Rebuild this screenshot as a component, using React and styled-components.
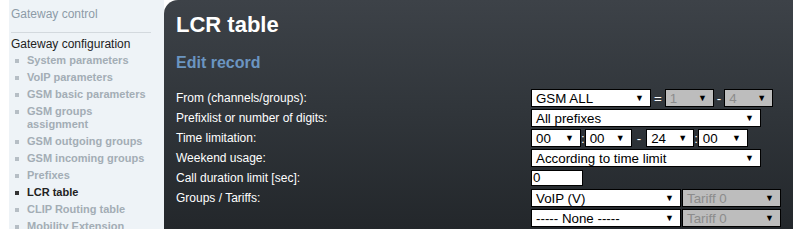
import React from "react";
import styled, { createGlobalStyle } from "styled-components";

const GlobalStyle = createGlobalStyle`
  html, body {
    margin: 0;
    padding: 0;
    background: #ffffff;
  }
  body {
    font-family: "Liberation Sans", Arial, sans-serif;
  }
`;

const Page = styled.div`
  display: flex;
  height: 229px;
  overflow: hidden;
  padding: 0 21px 0 9px;
  background: #ffffff;
`;

const Sidebar = styled.nav`
  width: 155px;
  flex-shrink: 0;
  box-sizing: border-box;
  padding: 6px 13px 0 2px;
  background: #eef3f7;
`;

const TopLink = styled.div`
  font-size: 12px;
  line-height: 16px;
  color: #8d9ba7;
`;

const Divider = styled.hr`
  margin: 10px 0 0;
  border: 0;
  border-top: 1px solid #d3d9de;
`;

const SectionTitle = styled.div`
  margin-top: 3px;
  font-size: 12px;
  line-height: 16px;
  color: #222222;
`;

const MenuList = styled.ul`
  list-style: none;
  margin: 0;
  padding: 0 0 0 16px;
`;

const MenuItem = styled.li`
  position: relative;
  padding: 2px 0;
  font-size: 11px;
  font-weight: bold;
  line-height: 13px;
  color: ${(p) => (p.$active ? "#222222" : "#a3adb5")};

  &::before {
    content: "";
    position: absolute;
    left: -12px;
    top: 7px;
    width: 4px;
    height: 4px;
    background: ${(p) => (p.$active ? "#333333" : "#b6bec5")};
  }
`;

const Main = styled.main`
  flex: 1;
  box-sizing: border-box;
  padding: 12px 12px 0;
  border-top-left-radius: 14px;
  background: linear-gradient(180deg, #3d4248 0%, #30353a 50%, #23272b 100%);
`;

const Title = styled.h1`
  margin: 0;
  font-size: 22px;
  line-height: 26px;
  font-weight: bold;
  color: #ffffff;
`;

const Subtitle = styled.h2`
  margin: 15px 0 0;
  font-size: 16px;
  line-height: 20px;
  font-weight: bold;
  color: #6b95c1;
`;

const Form = styled.div`
  margin-top: 15px;
  display: grid;
  grid-template-columns: 355px 1fr;
  grid-auto-rows: 20px;
  align-items: center;
`;

const Label = styled.div`
  font-size: 12px;
  color: #ffffff;
`;

const Controls = styled.div`
  display: flex;
  align-items: center;
`;

const SelectBox = styled.div`
  display: inline-flex;
  align-items: center;
  justify-content: space-between;
  box-sizing: border-box;
  width: ${(p) => p.$width}px;
  height: 18px;
  margin-left: ${(p) => p.$gap || 0}px;
  padding: 0 6px 0 4px;
  border: 1px solid #000000;
  background: ${(p) => (p.$disabled ? "#bdbdbd" : "#ffffff")};
  color: ${(p) => (p.$disabled ? "#8c8c8c" : "#000000")};
  font-size: 13.33px;
  white-space: nowrap;
`;

const Arrow = styled.span`
  font-size: 9px;
  color: #000000;
`;

const Sep = styled.span`
  margin: 0 ${(p) => p.$space}px;
  font-size: 13.33px;
  color: #ffffff;
`;

const TextInput = styled.div`
  box-sizing: border-box;
  width: 52px;
  height: 16px;
  padding: 0 1px;
  border: 1px solid #000000;
  background: #ffffff;
  font-size: 13.33px;
  line-height: 14px;
  color: #000000;
`;

function Select({ value, width, disabled, gap }) {
  return (
    <SelectBox $width={width} $disabled={disabled} $gap={gap}>
      <span>{value}</span>
      <Arrow>▼</Arrow>
    </SelectBox>
  );
}

const menu = [
  "System parameters",
  "VoIP parameters",
  "GSM basic parameters",
  "GSM groups assignment",
  "GSM outgoing groups",
  "GSM incoming groups",
  "Prefixes",
  "LCR table",
  "CLIP Routing table",
  "Mobility Extension",
];

export default function App() {
  return (
    <>
      <GlobalStyle />
      <Page>
        <Sidebar>
          <TopLink>Gateway control</TopLink>
          <Divider />
          <SectionTitle>Gateway configuration</SectionTitle>
          <MenuList>
            {menu.map((item) => (
              <MenuItem key={item} $active={item === "LCR table"}>
                {item}
              </MenuItem>
            ))}
          </MenuList>
        </Sidebar>
        <Main>
          <Title>LCR table</Title>
          <Subtitle>Edit record</Subtitle>
          <Form>
            <Label>From (channels/groups):</Label>
            <Controls>
              <Select value="GSM ALL" width={120} />
              <Sep $space={3}>=</Sep>
              <Select value="1" width={49} disabled />
              <Sep $space={3}>-</Sep>
              <Select value="4" width={49} disabled />
            </Controls>

            <Label>Prefixlist or number of digits:</Label>
            <Controls>
              <Select value="All prefixes" width={230} />
            </Controls>

            <Label>Time limitation:</Label>
            <Controls>
              <Select value="00" width={50} />
              <Sep $space={0}>:</Sep>
              <Select value="00" width={47} />
              <Sep $space={5}>-</Sep>
              <Select value="24" width={48} />
              <Sep $space={0}>:</Sep>
              <Select value="00" width={50} />
            </Controls>

            <Label>Weekend usage:</Label>
            <Controls>
              <Select value="According to time limit" width={230} />
            </Controls>

            <Label>Call duration limit [sec]:</Label>
            <Controls>
              <TextInput>0</TextInput>
            </Controls>

            <Label>Groups / Tariffs:</Label>
            <Controls>
              <Select value="VoIP (V)" width={150} />
              <Select value="Tariff 0" width={99} disabled gap={1} />
            </Controls>

            <Label />
            <Controls>
              <Select value="----- None -----" width={150} />
              <Select value="Tariff 0" width={99} disabled gap={1} />
            </Controls>
          </Form>
        </Main>
      </Page>
    </>
  );
}
